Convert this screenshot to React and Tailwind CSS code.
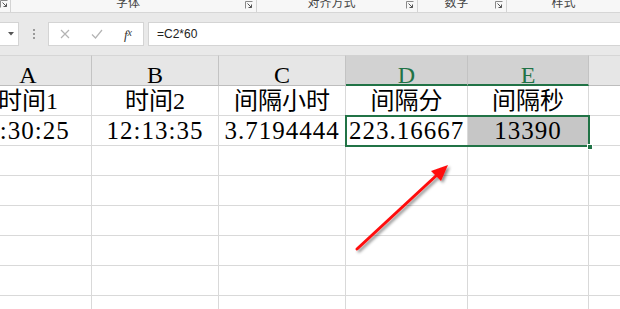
import React from "react";

const headers = ["A", "B", "C", "D", "E", ""];
const rows = [
  ["时间1", "时间2", "间隔小时", "间隔分", "间隔秒", ""],
  ["8:30:25", "12:13:35", "3.7194444", "223.16667", "13390", ""],
  ["", "", "", "", "", ""],
  ["", "", "", "", "", ""],
  ["", "", "", "", "", ""],
  ["", "", "", "", "", ""],
  ["", "", "", "", "", ""],
  ["", "", "", "", "", ""],
];

function Launcher() {
  return (
    <svg width="8" height="8" viewBox="0 0 8 8" className="shrink-0">
      <path d="M0.5 7.5V0.5H7.5" fill="none" stroke="#8a8a8a" strokeWidth="1" />
      <path d="M2.5 2.5L6.5 6.5M6.5 3.5V6.5H3.5" fill="none" stroke="#555" strokeWidth="1" />
    </svg>
  );
}

function GroupLabel({ children, launcher = true, className }) {
  return (
    <div className={`flex h-full items-start border-r border-[#d4d4d4] ${className}`}>
      <span className="mt-[-4px] flex-1 text-center text-[12px] leading-[12px] text-[#444]">{children}</span>
      {launcher && <div className="mr-[3px] mt-[1px]"><Launcher /></div>}
    </div>
  );
}

function App() {
  return (
    <div className="relative h-[309px] w-[620px] overflow-hidden bg-white [font-family:'Liberation_Serif','Noto_Sans_CJK_SC',serif]">
      {/* ribbon group labels */}
      <div className="flex h-[13px] border-b border-[#d6d6d6] bg-[#f7f7f7] [font-family:'Noto_Sans_CJK_SC',sans-serif]">
        <div className="flex w-[11px] items-start border-r border-[#d4d4d4]">
          <Launcher />
        </div>
        <GroupLabel className="w-[246px]">字体</GroupLabel>
        <GroupLabel className="w-[161px]">对齐方式</GroupLabel>
        <GroupLabel className="w-[89px]">数字</GroupLabel>
        <GroupLabel className="flex-1 border-r-0" launcher={false}>样式</GroupLabel>
      </div>

      {/* formula bar */}
      <div className="flex h-[42px] items-start bg-[#e9e9e9] pt-[9px]">
        <div className="flex h-[24px] w-[19px] items-center justify-end border border-l-0 border-[#d4d4d4] bg-white pr-[4px]">
          <svg width="6" height="4" viewBox="0 0 6 4">
            <path d="M0 0H6L3 3.5Z" fill="#555" />
          </svg>
        </div>
        <div className="flex h-[24px] w-[29px] flex-col items-center justify-center gap-[2px]">
          <span className="h-[2px] w-[2px] bg-[#9a9a9a]" />
          <span className="h-[2px] w-[2px] bg-[#9a9a9a]" />
          <span className="h-[2px] w-[2px] bg-[#9a9a9a]" />
        </div>
        <div className="flex h-[24px] w-[96px] items-center border border-[#d4d4d4] bg-white">
          <div className="flex w-[32px] justify-center">
            <svg width="10" height="10" viewBox="0 0 10 10">
              <path d="M1 1L9 9M9 1L1 9" stroke="#b4b4b4" strokeWidth="1.2" />
            </svg>
          </div>
          <div className="flex w-[32px] justify-center">
            <svg width="12" height="10" viewBox="0 0 12 10">
              <path d="M1 5.5L4.5 9L11 1" fill="none" stroke="#b4b4b4" strokeWidth="1.2" />
            </svg>
          </div>
          <div className="flex w-[30px] justify-center text-[13px] italic leading-none text-[#333]">
            f<span className="text-[10px]">x</span>
          </div>
        </div>
        <div className="ml-[4px] flex h-[24px] flex-1 items-center border border-r-0 border-[#d4d4d4] bg-white pl-[8px] text-[12px] text-[#222] [font-family:'Liberation_Sans',sans-serif]">
          =C2*60
        </div>
      </div>

      {/* sheet grid */}
      <div className="ml-[-35px] grid w-[760px] grid-cols-[127px_127px_127px_122px_121px_136px]">
        {headers.map((h, i) => {
          const selected = i === 3 || i === 4;
          return (
            <div
              key={`h${i}`}
              className={
                selected
                  ? "flex h-[31px] items-start justify-center border-t border-r border-b-2 border-t-[#d2d2d2] border-r-[#c3c3c3] border-b-[#217346] bg-[#d2d2d2] pt-[7px] text-[24px] leading-[24px] text-[#217346]"
                  : "flex h-[31px] items-start justify-center border-t border-r border-b border-t-[#d6d6d6] border-r-[#c3c3c3] border-b-[#bdbdbd] bg-[#e6e6e6] pt-[7px] text-[24px] leading-[24px] text-black"
              }
            >
              {h}
            </div>
          );
        })}
        {rows.map((row, r) =>
          row.map((v, c) => (
            <div
              key={`${r}-${c}`}
              className={`flex h-[30px] items-start justify-center whitespace-nowrap border-r border-b border-[#d9d9d9] pt-[3px] leading-[24px] text-black ${
                r === 1 ? "text-[25px] tracking-[1px]" : "text-[24px]"
              } ${r === 1 && c === 4 ? "bg-[#c6c6c6]" : "bg-white"}`}
            >
              {v}
            </div>
          ))
        )}
      </div>

      {/* selection outline */}
      <div className="absolute left-[345px] top-[115px] h-[32px] w-[245px] border-2 border-[#217346]" />
      <div className="absolute left-[587px] top-[144px] h-[6px] w-[6px] border border-white bg-[#217346]" />

      {/* annotation arrow */}
      <svg className="pointer-events-none absolute left-0 top-0" width="620" height="309" viewBox="0 0 620 309">
        <defs>
          <filter id="sh" x="-20%" y="-20%" width="140%" height="140%">
            <feDropShadow dx="2" dy="2" stdDeviation="1.5" floodColor="#000" floodOpacity="0.45" />
          </filter>
        </defs>
        <g filter="url(#sh)">
          <line x1="357" y1="249" x2="438" y2="174" stroke="#ff1010" strokeWidth="3" strokeLinecap="round" />
          <polygon points="448,165 441,181 431,171" fill="#ff1010" />
        </g>
      </svg>
    </div>
  );
}

export default App;
